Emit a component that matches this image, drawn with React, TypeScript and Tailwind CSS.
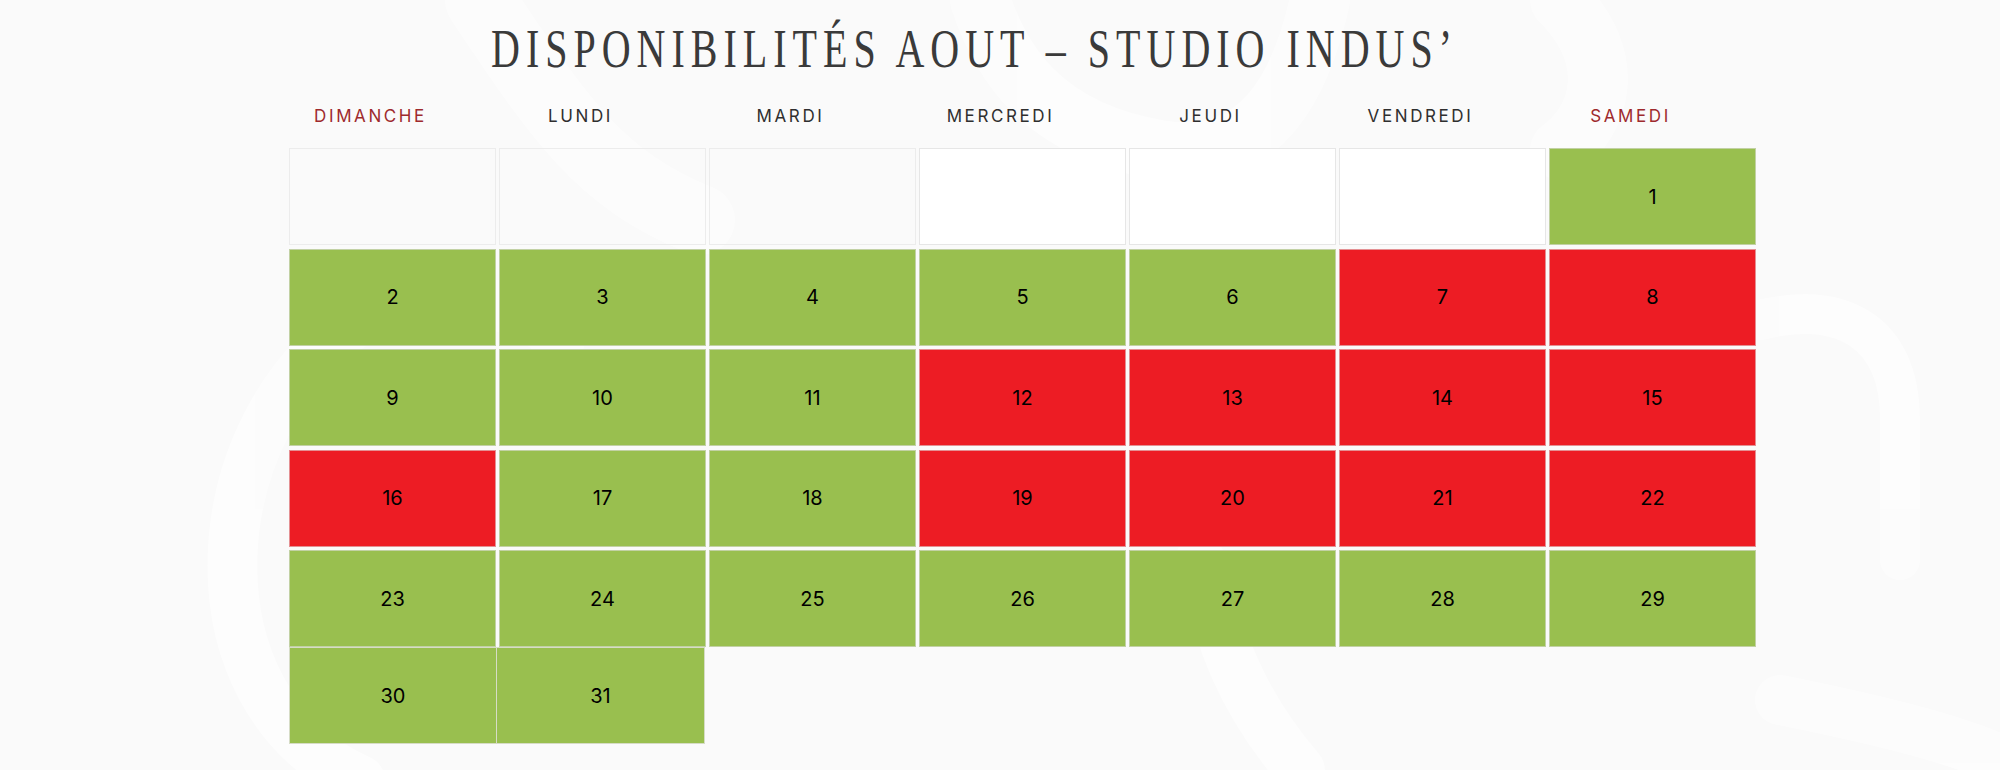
import React from 'react';

type Status = 'empty' | 'blank' | 'free' | 'busy';

interface DayCell {
  day?: number;
  status: Status;
}

const days = ['DIMANCHE', 'LUNDI', 'MARDI', 'MERCREDI', 'JEUDI', 'VENDREDI', 'SAMEDI'];

// jours réservés en août
const busyDays = [7, 8, 12, 13, 14, 15, 16, 19, 20, 21, 22];

function buildWeeks(): DayCell[] {
  const cells: DayCell[] = [
    { status: 'empty' },
    { status: 'empty' },
    { status: 'empty' },
    { status: 'blank' },
    { status: 'blank' },
    { status: 'blank' },
  ];
  for (let d = 1; d <= 29; d++) {
    cells.push({ day: d, status: busyDays.includes(d) ? 'busy' : 'free' });
  }
  return cells;
}

const cellColor: Record<Status, string> = {
  empty: 'bg-transparent border-[#e6e6e6]/70',
  blank: 'bg-white border-[#e6e6e6]',
  free: 'bg-[#99bf4f] border-[#dddddd]/60',
  busy: 'bg-[#ed1c24] border-[#dddddd]/60',
};

function Decor() {
  // grandes formes blanches en fond (quasi invisibles)
  return (
    <svg
      className="absolute inset-0 w-full h-full pointer-events-none"
      viewBox="0 0 2000 770"
      fill="none"
    >
      <g stroke="#ffffff" strokeLinecap="round" opacity="0.55">
        <path d="M480 0 C 560 120, 600 180, 700 220" strokeWidth="70" />
        <path d="M360 780 C 180 700, 200 420, 360 320 C 430 280, 520 300, 560 340" strokeWidth="50" />
        <path d="M980 0 C 1000 60, 1040 130, 1160 150 C 1260 165, 1300 90, 1320 0" strokeWidth="60" />
        <path d="M1560 0 C 1620 60, 1600 120, 1560 150" strokeWidth="60" />
        <path d="M1760 320 C 1840 300, 1900 330, 1900 420 L 1900 560" strokeWidth="40" />
        <path d="M1780 700 C 1880 720, 1960 740, 2000 760" strokeWidth="50" />
        <path d="M1200 560 C 1220 640, 1240 700, 1300 770" strokeWidth="50" />
      </g>
    </svg>
  );
}

export default function App() {
  const cells = buildWeeks();

  return (
    <div className="relative w-full h-[770px] bg-[#fafafa] overflow-hidden font-['Inter','Liberation_Sans',sans-serif]">
      <Decor />
      <div className="relative flex flex-col pl-[286px] pt-[24px]">
        {/* titre */}
        <h1 className="ml-[205px] h-[50px] flex items-center text-[40px] leading-none tracking-[6px] text-[#3a3a3a] font-['Liberation_Serif',serif] font-normal origin-center scale-y-[1.36]">
          DISPONIBILITÉS AOUT – STUDIO INDUS’
        </h1>

        {/* jours */}
        <div className="grid grid-cols-[repeat(7,207px)] gap-x-[3px] mt-[32px] -ml-[19px]">
          {days.map((d, i) => (
            <div
              key={d}
              className={`text-center text-[17px] leading-[20px] tracking-[2.6px] ${
                i === 0 || i === 6 ? 'text-[#9e2a2d]' : 'text-[#2f2f2f]'
              }`}
            >
              {d}
            </div>
          ))}
        </div>

        {/* calendrier */}
        <div className="grid grid-cols-[repeat(7,207px)] gap-x-[3px] gap-y-[3.5px] mt-[22px] ml-[3px]">
          {cells.map((c, idx) => (
            <div
              key={idx}
              className={`h-[97px] border flex items-center justify-center text-[20px] text-black ${cellColor[c.status]}`}
            >
              {c.day}
            </div>
          ))}
        </div>

        {/* dernière ligne */}
        <div className="flex ml-[3px]">
          <div className="w-[208px] h-[97px] border border-[#d6dcc6] bg-[#99bf4f] flex items-center justify-center text-[20px] text-black">
            30
          </div>
          <div className="w-[208px] h-[97px] border border-l-0 border-[#d6dcc6] bg-[#99bf4f] flex items-center justify-center text-[20px] text-black">
            31
          </div>
        </div>
      </div>
    </div>
  );
}
